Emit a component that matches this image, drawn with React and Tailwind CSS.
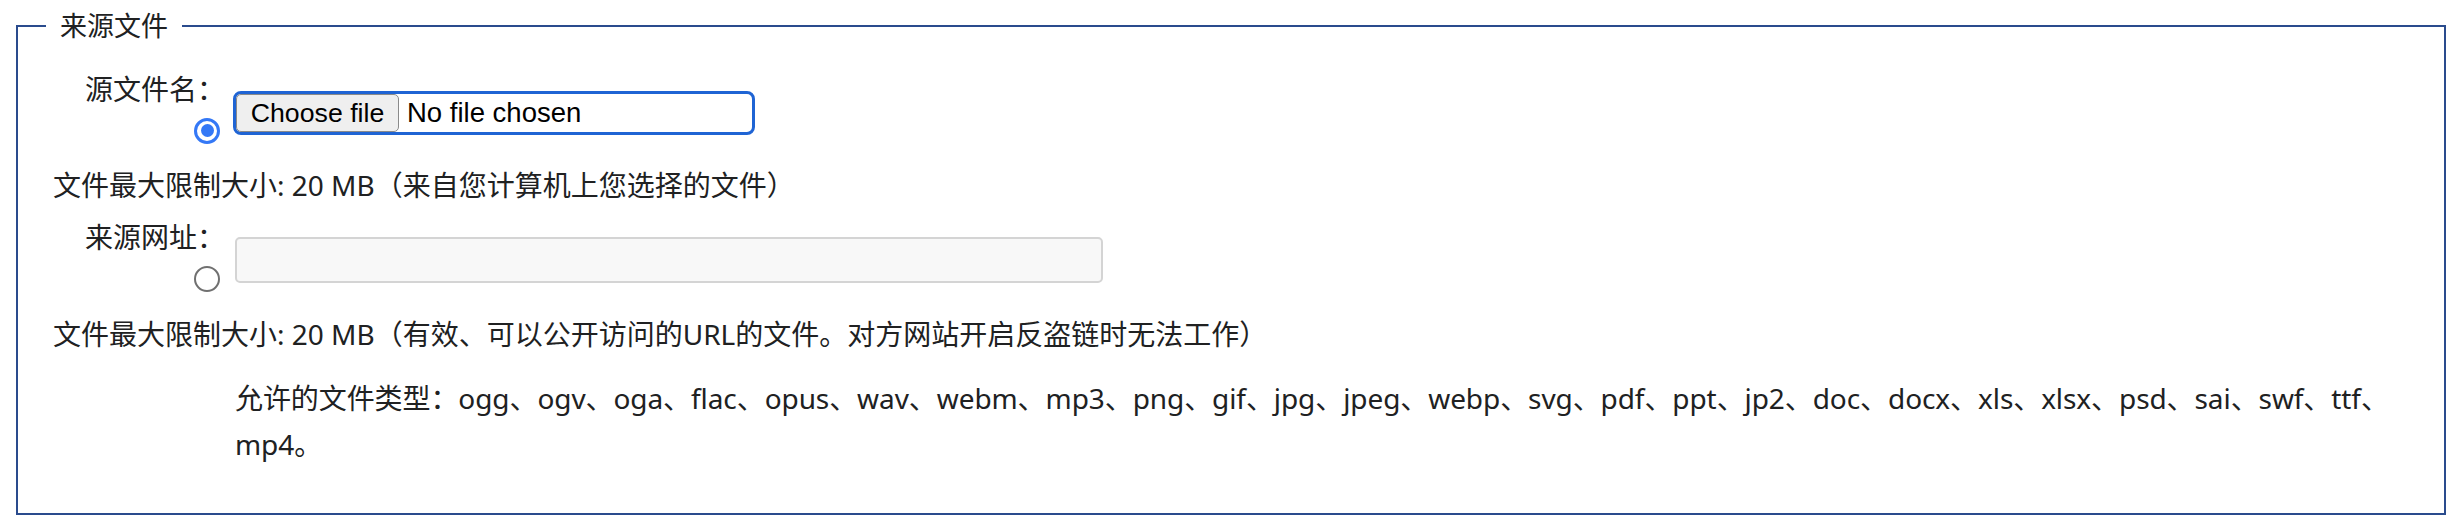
import React from "react";

function Radio({ checked }) {
  if (checked) {
    return (
      <span className="flex h-[26px] w-[26px] items-center justify-center rounded-full border-[3px] border-[#3478f6] bg-white">
        <span className="h-[13px] w-[13px] rounded-full bg-[#3478f6]" />
      </span>
    );
  }
  return <span className="block h-[26px] w-[26px] rounded-full border-2 border-[#707070] bg-white" />;
}

function LabelCell({ text, checked }) {
  return (
    <div className="flex w-[174px] shrink-0 flex-col items-end">
      <div className="h-[41px] pr-[2px] leading-[41px] whitespace-nowrap">{text}</div>
      <div className="flex h-[41px] items-center pr-[7px]">
        <Radio checked={checked} />
      </div>
    </div>
  );
}

export default function App() {
  return (
    <div className="h-[528px] w-[2454px] overflow-hidden bg-white text-[28px] text-[#202122] font-['Noto_Sans','Noto_Sans_CJK_SC',sans-serif]">
      <fieldset className="mt-[6px] ml-[16px] mr-[8px] min-w-0 border-2 border-[#2a4b8d] px-0 pt-[23px] pb-[46px]">
        <legend className="ml-[28px] px-[14px] text-[27px] leading-[40px]">来源文件</legend>
        <div className="pl-[35px]">
          <div className="flex items-start">
            <LabelCell text="源文件名：" checked />
            <div className="mt-[22px] ml-[6px] flex h-[44px] w-[522px] items-stretch rounded-[8px] border-[3px] border-[#1f64d4] bg-white">
              <div className="flex w-[163px] items-center justify-center rounded-[5px] border border-[#8a8a8a] bg-[#efefef] text-[26.7px] text-black font-['Liberation_Sans',sans-serif]">
                Choose file
              </div>
              <div className="ml-[8px] flex items-center text-[27.5px] text-black font-['Liberation_Sans',sans-serif]">
                No file chosen
              </div>
            </div>
          </div>

          <div className="mt-[14px] leading-[41px] whitespace-nowrap">
            文件最大限制大小: 20 MB（来自您计算机上您选择的文件）
          </div>

          <div className="mt-[11px] flex items-start">
            <LabelCell text="来源网址：" />
            <input
              type="text"
              disabled
              className="mt-[20px] ml-[8px] h-[46px] w-[868px] rounded-[5px] border-2 border-[#d4d4d4] bg-[#f8f8f8]"
            />
          </div>

          <div className="mt-[15px] leading-[41px] whitespace-nowrap">
            文件最大限制大小: 20 MB（有效、可以公开访问的URL的文件。对方网站开启反盗链时无法工作）
          </div>

          <div className="mt-[20px] ml-[182px] leading-[46px] tracking-[-0.08px]">
            允许的文件类型：ogg、ogv、oga、flac、opus、wav、webm、mp3、png、gif、jpg、jpeg、webp、svg、pdf、ppt、jp2、doc、docx、xls、xlsx、psd、sai、swf、ttf、
            <br />
            mp4。
          </div>
        </div>
      </fieldset>
    </div>
  );
}
